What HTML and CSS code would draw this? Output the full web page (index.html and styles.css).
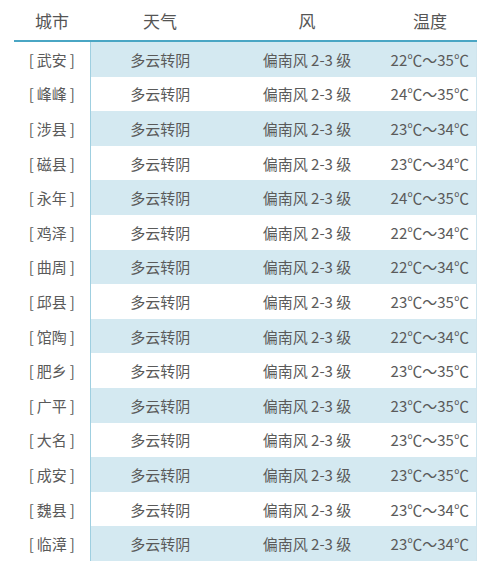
FILE: index.html
```html
<!DOCTYPE html>
<html lang="zh">
<head>
<meta charset="utf-8">
<link rel="stylesheet" href="styles.css">
</head>
<body>
<table class="weather">
  <thead>
    <tr><th class="c-city">城市</th><th class="c-wx">天气</th><th class="c-wind">风</th><th class="c-temp">温度</th></tr>
  </thead>
  <tbody>
    <tr><td class="city">[<span class="nm">武安</span>]</td><td>多云转阴</td><td>偏南风 2-3 级</td><td>22℃～35℃</td></tr>
    <tr><td class="city">[<span class="nm">峰峰</span>]</td><td>多云转阴</td><td>偏南风 2-3 级</td><td>24℃～35℃</td></tr>
    <tr><td class="city">[<span class="nm">涉县</span>]</td><td>多云转阴</td><td>偏南风 2-3 级</td><td>23℃～34℃</td></tr>
    <tr><td class="city">[<span class="nm">磁县</span>]</td><td>多云转阴</td><td>偏南风 2-3 级</td><td>23℃～34℃</td></tr>
    <tr><td class="city">[<span class="nm">永年</span>]</td><td>多云转阴</td><td>偏南风 2-3 级</td><td>24℃～35℃</td></tr>
    <tr><td class="city">[<span class="nm">鸡泽</span>]</td><td>多云转阴</td><td>偏南风 2-3 级</td><td>22℃～34℃</td></tr>
    <tr><td class="city">[<span class="nm">曲周</span>]</td><td>多云转阴</td><td>偏南风 2-3 级</td><td>22℃～34℃</td></tr>
    <tr><td class="city">[<span class="nm">邱县</span>]</td><td>多云转阴</td><td>偏南风 2-3 级</td><td>23℃～35℃</td></tr>
    <tr><td class="city">[<span class="nm">馆陶</span>]</td><td>多云转阴</td><td>偏南风 2-3 级</td><td>22℃～34℃</td></tr>
    <tr><td class="city">[<span class="nm">肥乡</span>]</td><td>多云转阴</td><td>偏南风 2-3 级</td><td>23℃～35℃</td></tr>
    <tr><td class="city">[<span class="nm">广平</span>]</td><td>多云转阴</td><td>偏南风 2-3 级</td><td>23℃～35℃</td></tr>
    <tr><td class="city">[<span class="nm">大名</span>]</td><td>多云转阴</td><td>偏南风 2-3 级</td><td>23℃～35℃</td></tr>
    <tr><td class="city">[<span class="nm">成安</span>]</td><td>多云转阴</td><td>偏南风 2-3 级</td><td>23℃～35℃</td></tr>
    <tr><td class="city">[<span class="nm">魏县</span>]</td><td>多云转阴</td><td>偏南风 2-3 级</td><td>23℃～34℃</td></tr>
    <tr><td class="city">[<span class="nm">临漳</span>]</td><td>多云转阴</td><td>偏南风 2-3 级</td><td>23℃～34℃</td></tr>
  </tbody>
</table>
</body>
</html>
```
FILE: styles.css
```css
html, body {
  margin: 0;
  padding: 0;
  background: #ffffff;
}
body {
  padding: 0 24px 0 14px;
  font-family: "Noto Sans CJK SC", "Noto Sans", sans-serif;
  color: #5a5a5a;
}
.weather {
  width: 462px;
  border-collapse: collapse;
  table-layout: fixed;
}
.weather th {
  height: 40px;
  padding: 0;
  font-size: 17px;
  font-weight: normal;
  text-align: center;
  color: #555555;
  border-bottom: 2px solid #4aa6c4;
}
.c-city { width: 76px; }
.c-wx { width: 140px; }
.c-wind { width: 154px; }
.c-temp { width: 92px; }
.weather td {
  height: 34.6px;
  padding: 0;
  font-size: 15px;
  text-align: center;
  color: #5a5a5a;
  line-height: 1;
}
.weather td.city {
  border-right: 1px solid #9fcfe0;
  background: #ffffff;
}
.nm {
  margin: 0 3px;
}
.weather td:last-child {
  border-right: 1px solid #cfe5ee;
}
.weather tbody tr:nth-child(odd) td:not(.city) {
  background: #d4e9f1;
}
```
